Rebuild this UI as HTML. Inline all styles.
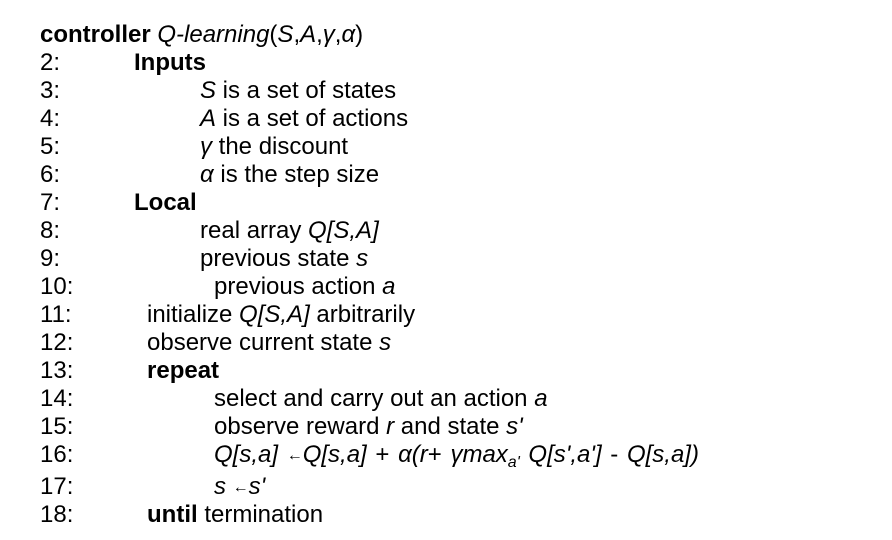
<!DOCTYPE html>
<html><head><meta charset="utf-8"><style>
body{margin:0;width:892px;height:540px;background:#fff;position:relative;font-family:"Liberation Sans",sans-serif;font-size:24px;color:#000;overflow:hidden}
div{position:absolute;line-height:28px;white-space:nowrap}
.n{left:40px}
i{font-style:italic}
.ar{font-size:16px;vertical-align:2px}
sub{font-size:16px;font-style:italic;vertical-align:-5px;line-height:0}
</style></head><body>
<div class="n" style="top:21px"><b>controller</b> <i>Q-learning</i>(<i>S</i>,<i>A</i>,<i>γ</i>,<i>α</i>)</div>
<div class="n" style="top:49px">2:</div><div style="left:134px;top:49px"><b>Inputs</b></div>
<div class="n" style="top:77px">3:</div><div style="left:200px;top:77px"><i>S</i> is a set of states</div>
<div class="n" style="top:105px">4:</div><div style="left:200px;top:105px"><i>A</i> is a set of actions</div>
<div class="n" style="top:133px">5:</div><div style="left:200px;top:133px"><i>γ</i> the discount</div>
<div class="n" style="top:161px">6:</div><div style="left:200px;top:161px"><i>α</i> is the step size</div>
<div class="n" style="top:189px">7:</div><div style="left:134px;top:189px"><b>Local</b></div>
<div class="n" style="top:217px">8:</div><div style="left:200px;top:217px">real array <i>Q[S,A]</i></div>
<div class="n" style="top:245px">9:</div><div style="left:200px;top:245px">previous state <i>s</i></div>
<div class="n" style="top:273px">10:</div><div style="left:214px;top:273px">previous action <i>a</i></div>
<div class="n" style="top:301px">11:</div><div style="left:147px;top:301px">initialize <i>Q[S,A]</i> arbitrarily</div>
<div class="n" style="top:329px">12:</div><div style="left:147px;top:329px">observe current state <i>s</i></div>
<div class="n" style="top:357px">13:</div><div style="left:147px;top:357px"><b>repeat</b></div>
<div class="n" style="top:385px">14:</div><div style="left:214px;top:385px">select and carry out an action <i>a</i></div>
<div class="n" style="top:413px">15:</div><div style="left:214px;top:413px">observe reward <i>r</i> and state <i>s'</i></div>
<div class="n" style="top:441px">16:</div><div style="left:214px;top:441px;word-spacing:2px"><i>Q[s,a]</i> <span class="ar">←</span><i>Q[s,a]</i> + <i>α(r</i>+ <i>γmax<sub>a'</sub></i> <i>Q[s',a']</i> - <i>Q[s,a])</i></div>
<div class="n" style="top:473px">17:</div><div style="left:214px;top:473px"><i>s</i> <span class="ar">←</span><i>s'</i></div>
<div class="n" style="top:501px">18:</div><div style="left:147px;top:501px"><b>until</b> termination</div>
</body></html>
